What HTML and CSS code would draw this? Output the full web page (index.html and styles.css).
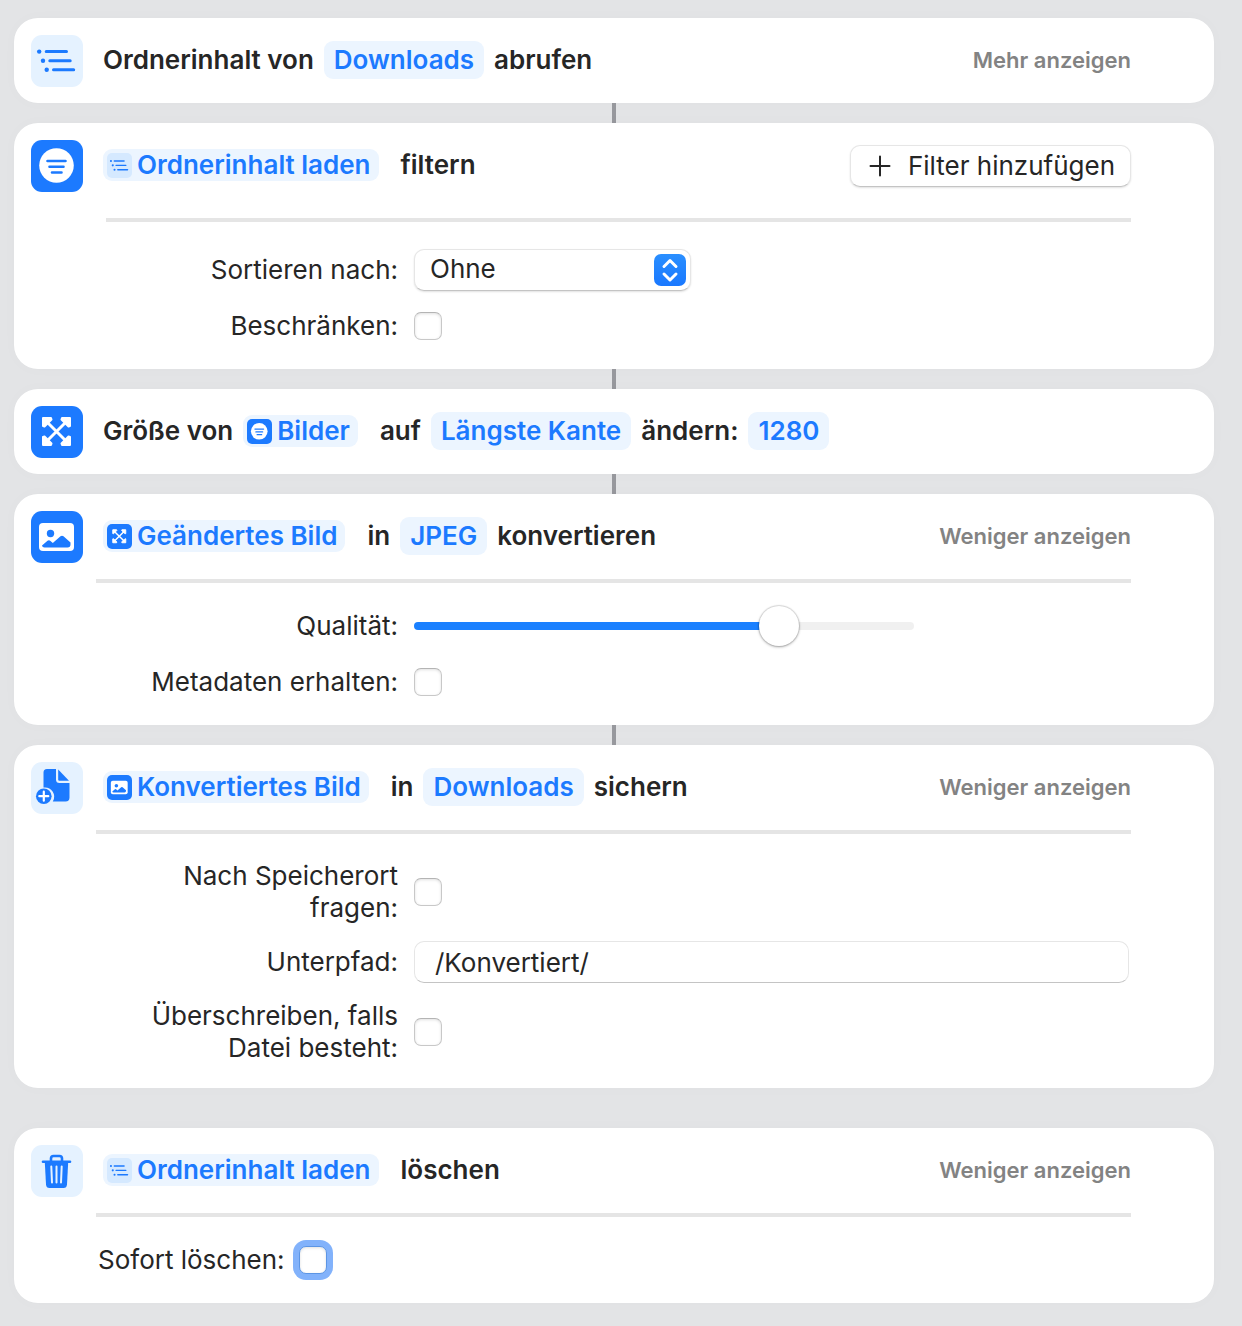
FILE: index.html
```html
<!DOCTYPE html>
<html lang="de">
<head>
<meta charset="utf-8">
<meta name="viewport" content="width=device-width, initial-scale=1">
<title>Kurzbefehl</title>
<link rel="stylesheet" href="styles.css">
</head>
<body>
<svg class="sprite" aria-hidden="true">
  <symbol id="icon-list" viewBox="0 0 52 52">
    <path d="M15.200 16.600H35.500M18.800 25.700H39.200M22.500 34.700H42.700" fill="none" stroke="currentColor" stroke-width="3" stroke-linecap="round"/>
    <circle cx="8.200" cy="16.600" r="2.200" fill="currentColor"/>
    <circle cx="12" cy="25.700" r="2.200" fill="currentColor"/>
    <circle cx="15.700" cy="34.700" r="2.200" fill="currentColor"/>
  </symbol>
  <symbol id="icon-filter" viewBox="0 0 52 52">
    <circle cx="25.500" cy="25.500" r="17.300" fill="#fff"/>
    <path d="M16.500 21H34.500M18.500 26.800H32.500M21 32.500H30.500" fill="none" stroke="#1c7aff" stroke-width="2.600" stroke-linecap="round"/>
  </symbol>
  <symbol id="icon-resize" viewBox="0 0 52 52">
    <path d="M15 15L36 36M36 15L15 36" stroke="#fff" stroke-width="3"/>
    <g fill="#fff" stroke="#fff" stroke-width="2" stroke-linejoin="round">
      <path d="M12 12H20L20.500 13.500L13.500 20.500L12 20Z"/>
      <path d="M39 12H31L30.500 13.500L37.500 20.500L39 20Z"/>
      <path d="M12 39H20L20.500 37.500L13.500 30.500L12 31Z"/>
      <path d="M39 39H31L30.500 37.500L37.500 30.500L39 31Z"/>
    </g>
  </symbol>
  <symbol id="icon-image" viewBox="0 0 52 52">
    <rect x="8" y="12" width="35" height="28" rx="4" fill="#fff"/>
    <circle cx="19.500" cy="22.500" r="3.700" fill="#1c7aff"/>
    <path d="M11 34.500L16.500 29.800Q18 28.800 19.500 30L21.800 32L29.500 25.300Q31 24.200 32.500 25.300L39.500 31.500V33.500Q39.500 36.500 36.500 36.500H13.500Q11.200 36.500 11 34.500Z" fill="#1c7aff"/>
  </symbol>
  <symbol id="icon-save" viewBox="0 0 52 52">
    <path d="M16 7H25V17.500Q25 21 28.500 21H38.500V35.500Q38.500 39.500 34.500 39.500H21.800A9.300 9.300 0 0 0 12.500 25.500V10.500Q12.500 7 16 7Z" fill="currentColor"/>
    <path d="M27.200 7.500L38 18.700H28.300Q27.200 18.700 27.200 17.500Z" fill="currentColor"/>
    <circle cx="12.800" cy="34.200" r="7.800" fill="currentColor"/>
    <path d="M8.300 34.200H17.300M12.800 29.700V38.700" stroke="#fff" stroke-width="2.200" stroke-linecap="round"/>
  </symbol>
  <symbol id="icon-trash" viewBox="0 0 52 52">
    <path d="M12 16.800H39" stroke="currentColor" stroke-width="2.600" stroke-linecap="round"/>
    <path d="M20 16V13.500Q20 11 22.500 11H28.500Q31 11 31 13.500V16" fill="none" stroke="currentColor" stroke-width="2.600"/>
    <path d="M13.800 17H37.200L36 39.500Q35.700 43 32.500 43H18.500Q15.300 43 15 39.500Z" fill="currentColor"/>
    <path d="M20.300 21.500L21 37.500M25.500 21.500V37.500M30.700 21.500L30 37.500" stroke="#e5f2ff" stroke-width="2" stroke-linecap="round"/>
  </symbol>
</svg>

<main class="workflow">
  <section class="card linked">
    <header class="card-header">
      <svg class="action-icon light"><use href="#icon-list"/></svg>
      <h2 class="title"><span>Ordnerinhalt von</span><button class="token">Downloads</button><span>abrufen</span></h2>
      <button class="toggle">Mehr anzeigen</button>
    </header>
  </section>

  <section class="card linked">
    <header class="card-header">
      <svg class="action-icon"><use href="#icon-filter"/></svg>
      <h2 class="title"><button class="variable"><svg class="variable-icon pale"><use href="#icon-list"/></svg>Ordnerinhalt laden</button><span>filtern</span></h2>
      <button class="add-filter"><svg class="plus" viewBox="0 0 22 22"><path d="M11 1.500V20.500M1.500 11H20.500" stroke="currentColor" stroke-width="2" stroke-linecap="round"/></svg>Filter hinzufügen</button>
    </header>
    <hr class="divider inset">
    <div class="fields">
      <label class="label" for="sort">Sortieren nach:</label>
      <div class="select">
        <select id="sort"><option>Ohne</option></select>
        <svg class="stepper" viewBox="0 0 32 32" aria-hidden="true"><path d="M10 12.500L16 6.500L22 12.500M10 20L16 26L22 20" fill="none" stroke="#fff" stroke-width="3" stroke-linecap="round" stroke-linejoin="round"/></svg>
      </div>
      <label class="label" for="limit">Beschränken:</label>
      <input class="check" type="checkbox" id="limit">
    </div>
  </section>

  <section class="card linked">
    <header class="card-header">
      <svg class="action-icon"><use href="#icon-resize"/></svg>
      <h2 class="title"><span>Größe von</span><button class="variable"><svg class="variable-icon"><use href="#icon-filter"/></svg>Bilder</button><span>auf</span><button class="token">Längste Kante</button><span>ändern:</span><button class="token">1280</button></h2>
    </header>
  </section>

  <section class="card linked">
    <header class="card-header">
      <svg class="action-icon"><use href="#icon-image"/></svg>
      <h2 class="title"><button class="variable"><svg class="variable-icon"><use href="#icon-resize"/></svg>Geändertes Bild</button><span>in</span><button class="token">JPEG</button><span>konvertieren</span></h2>
      <button class="toggle">Weniger anzeigen</button>
    </header>
    <hr class="divider">
    <div class="fields">
      <label class="label" for="quality">Qualität:</label>
      <input class="slider" type="range" id="quality" min="0" max="100" value="75">
      <label class="label" for="metadata">Metadaten erhalten:</label>
      <input class="check" type="checkbox" id="metadata">
    </div>
  </section>

  <section class="card last-linked">
    <header class="card-header">
      <svg class="action-icon light"><use href="#icon-save"/></svg>
      <h2 class="title"><button class="variable"><svg class="variable-icon"><use href="#icon-image"/></svg>Konvertiertes Bild</button><span>in</span><button class="token">Downloads</button><span>sichern</span></h2>
      <button class="toggle">Weniger anzeigen</button>
    </header>
    <hr class="divider">
    <div class="fields compact">
      <label class="label" for="ask">Nach Speicherort fragen:</label>
      <input class="check" type="checkbox" id="ask">
      <label class="label" for="subpath">Unterpfad:</label>
      <input class="text-field" type="text" id="subpath" value="/Konvertiert/">
      <label class="label" for="overwrite">Überschreiben, falls Datei besteht:</label>
      <input class="check" type="checkbox" id="overwrite">
    </div>
  </section>

  <section class="card">
    <header class="card-header">
      <svg class="action-icon light"><use href="#icon-trash"/></svg>
      <h2 class="title"><button class="variable"><svg class="variable-icon pale"><use href="#icon-list"/></svg>Ordnerinhalt laden</button><span>löschen</span></h2>
      <button class="toggle">Weniger anzeigen</button>
    </header>
    <hr class="divider">
    <div class="single-field">
      <label class="label" for="immediate">Sofort löschen:</label>
      <input class="check focused" type="checkbox" id="immediate">
    </div>
  </section>
</main>
</body>
</html>
```
FILE: styles.css
```css
:root {
  --blue: #1c7aff;
  --text: #262626;
  --tint: #ecf5ff;
}

* {
  box-sizing: border-box;
}

body {
  margin: 0;
  background: #e3e4e6;
  color: var(--text);
  font: 400 26px/32px Inter, "Liberation Sans", sans-serif;
}

button,
input,
select {
  margin: 0;
  border: 0;
  font: inherit;
  color: inherit;
}

button {
  padding: 0;
  background: none;
  white-space: nowrap;
}

.sprite {
  position: absolute;
  width: 0;
  height: 0;
}

.workflow {
  padding: 18px 28px 23px 14px;
}

.card {
  padding: 17px 83px 0 17px;
  border-radius: 24px;
  background: #fff;
  box-shadow: 0 0 16px rgba(0, 0, 0, 0.02);
}

.card-header {
  display: flex;
  align-items: center;
  gap: 20px;
  padding-bottom: 16px;
}

/* Line that joins an action to the next one */
.linked::after {
  content: "";
  position: absolute;
  left: 50%;
  bottom: -20px;
  width: 4px;
  height: 20px;
  margin-left: -2px;
  background: #97989d;
}

.linked {
  position: relative;
  margin-bottom: 20px;
}

.last-linked {
  margin-bottom: 40px;
}

.action-icon {
  flex: none;
  width: 52px;
  height: 52px;
  border-radius: 11px;
  background: var(--blue);
  color: var(--blue);
}

.action-icon.light {
  background: #e5f2ff;
}

.title {
  display: flex;
  flex: 1;
  align-items: center;
  gap: 10px;
  margin: 0;
  padding-bottom: 2px;
  font-size: 26px;
  font-weight: 600;
  white-space: nowrap;
}

.token,
.variable {
  background: var(--tint);
  color: var(--blue);
}

.token {
  padding: 3px 10px;
  border-radius: 9px;
}

.variable {
  display: flex;
  align-items: center;
  gap: 5px;
  margin-right: 12px;
  padding: 0 8px 0 4px;
  border-radius: 9px;
}

.variable-icon {
  width: 25px;
  height: 25px;
  border-radius: 5px;
  background: var(--blue);
  color: var(--blue);
}

.variable-icon.pale {
  background: #d5e9ff;
}

.toggle {
  padding-bottom: 2px;
  color: #838383;
  font-size: 22px;
  font-weight: 600;
}

.add-filter {
  display: flex;
  align-items: center;
  gap: 17px;
  height: 42px;
  padding: 0 15px 0 18px;
}

.plus {
  width: 22px;
  height: 22px;
}

.add-filter,
.select select,
.text-field {
  border: 1px solid #e6e6e6;
  border-bottom-color: #c4c4c4;
  border-radius: 10px;
  background: #fff;
  box-shadow: 0 1px 2px rgba(0, 0, 0, 0.12);
}

.divider {
  height: 4px;
  margin: 0 0 0 65px;
  border: 0;
  background: #e5e5e5;
}

.divider.inset {
  margin: 10px 0 0 75px;
}

.fields {
  display: grid;
  grid-template-columns: 250px minmax(0, 1fr);
  align-items: center;
  gap: 19px 16px;
  padding: 22px 2px 27px 117px;
}

.inset + .fields {
  padding-top: 27px;
}

.fields.compact {
  row-gap: 17px;
  padding-top: 26px;
  padding-bottom: 24px;
}

.fields .label {
  text-align: right;
}

.check {
  appearance: none;
  width: 28px;
  height: 28px;
  border: 1px solid #c8c8c8;
  border-top-color: #b4b4b4;
  border-radius: 7px;
  background: #fff;
  box-shadow: inset 0 1px 3px rgba(0, 0, 0, 0.12);
}

.check:checked {
  background: var(--blue);
}

.check.focused {
  border-color: #5c95e4;
  box-shadow: 0 0 0 6px #82b2fb, inset 0 1px 3px rgba(0, 0, 0, 0.12);
}

.select {
  display: grid;
  width: 277px;
  align-items: center;
}

.select select,
.stepper {
  grid-area: 1 / 1;
}

.select select {
  appearance: none;
  width: 100%;
  height: 42px;
  padding: 0 15px 2px;
}

.stepper {
  justify-self: end;
  width: 32px;
  height: 32px;
  margin-right: 5px;
  border-radius: 7px;
  background: linear-gradient(#2a8fff, #1a78ff);
  pointer-events: none;
}

.slider {
  appearance: none;
  width: 500px;
  max-width: 100%;
  height: 42px;
  background: none;
}

.slider::-webkit-slider-runnable-track {
  height: 8px;
  border-radius: 4px;
  background: linear-gradient(to right, #1a80ff 74%, #f0f0f0 74%);
}

.slider::-webkit-slider-thumb {
  appearance: none;
  width: 40px;
  height: 40px;
  margin-top: -16px;
  border-radius: 50%;
  background: #fff;
  box-shadow: 0 0 1px 1px rgba(0, 0, 0, 0.12), 0 1px 3px rgba(0, 0, 0, 0.3);
}

.text-field {
  width: 100%;
  height: 42px;
  padding: 0 20px;
  box-shadow: none;
}

.single-field {
  display: flex;
  align-items: center;
  gap: 14px;
  padding: 27px 0 27px 67px;
}
```
